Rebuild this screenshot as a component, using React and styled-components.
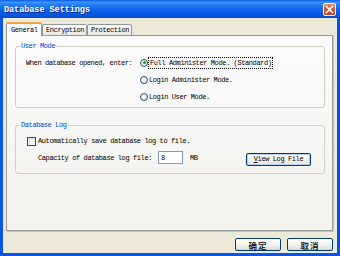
import React from 'react'
import styled, { createGlobalStyle } from 'styled-components'

const GlobalStyle = createGlobalStyle`
  html, body {
    margin: 0;
    padding: 0;
    background: #ece9d8;
  }
  * {
    box-sizing: border-box;
  }
`

const App = () => {
  return (
    <>
      <GlobalStyle />
      <Window>
        <TitleBar>
          <Title>Database Settings</Title>
          <CloseButton aria-label="Close">
            <svg width="9" height="9" viewBox="0 0 9 9">
              <path d="M1.5 1.5 L7.5 7.5 M7.5 1.5 L1.5 7.5" stroke="#fff" strokeWidth="1.6" strokeLinecap="square" />
            </svg>
          </CloseButton>
        </TitleBar>

        <Frame>
          <TabStrip>
            <Tab $active>General</Tab>
            <Tab>Encryption</Tab>
            <Tab>Protection</Tab>
          </TabStrip>

          <Panel>
            <Group>
              <Legend>User Mode</Legend>
              <ModeGrid>
                <PromptCell>When database opened, enter:</PromptCell>
                <Option>
                  <Radio $checked />
                  <Focused>Full Administer Mode. (Standard)</Focused>
                </Option>
                <Option>
                  <Radio />
                  <span>Login Administer Mode.</span>
                </Option>
                <Option>
                  <Radio />
                  <span>Login User Mode.</span>
                </Option>
              </ModeGrid>
            </Group>

            <Group $log>
              <Legend $log>Database Log</Legend>
              <CheckRow>
                <Checkbox />
                <span>Automatically save database log to file.</span>
              </CheckRow>
              <CapacityRow>
                <span>Capacity of database log file:</span>
                <SizeInput>8</SizeInput>
                <Unit>MB</Unit>
                <ViewButton><u>V</u>iew Log File</ViewButton>
              </CapacityRow>
            </Group>
          </Panel>

          <Footer>
            <DialogButton>确定</DialogButton>
            <DialogButton>取消</DialogButton>
          </Footer>
        </Frame>
      </Window>
    </>
  )
}

const Window = styled.div`
  width: 340px;
  height: 256px;
  display: flex;
  flex-direction: column;
  font-family: "Liberation Mono", "DejaVu Sans Mono", monospace;
  font-size: 7px;
  letter-spacing: -0.4px;
  color: #000;
  overflow: hidden;
`

const TitleBar = styled.div`
  height: 18px;
  flex: 0 0 18px;
  display: flex;
  align-items: center;
  justify-content: space-between;
  padding: 0 4px 0 4px;
  background: linear-gradient(180deg, #0a5de0 0%, #3c93fb 12%, #2a84f5 22%, #1670ef 40%, #0a60e8 65%, #0656e2 85%, #0049d0 100%);
`

const Title = styled.div`
  color: #fff;
  font-weight: bold;
  font-size: 8.6px;
  letter-spacing: -0.1px;
  text-shadow: 1px 1px 0 #0a1f8a;
  padding-top: 1px;
`

const CloseButton = styled.div`
  width: 13px;
  height: 13px;
  display: flex;
  align-items: center;
  justify-content: center;
  border: 1px solid #fff;
  border-radius: 2px;
  background: linear-gradient(180deg, #e88a68 0%, #d9582f 45%, #c8401b 100%);
`

const Frame = styled.div`
  flex: 1;
  display: flex;
  flex-direction: column;
  background: #ece9d8;
  border-style: solid;
  border-color: #0a55e6;
  border-width: 0 3px 3px 3px;
  padding: 4px 4px 0 3px;
`

const TabStrip = styled.div`
  height: 14px;
  display: flex;
  align-items: flex-end;
  margin-bottom: -1px;
  position: relative;
  z-index: 1;
`

const Tab = styled.div`
  height: ${p => (p.$active ? '14px' : '12px')};
  width: ${p => (p.$active ? '36px' : '45px')};
  display: flex;
  align-items: center;
  padding-left: ${p => (p.$active ? '4px' : '3px')};
  border: 1px solid #919b9c;
  border-bottom: ${p => (p.$active ? 'none' : '1px solid #919b9c')};
  border-top: ${p => (p.$active ? '2px solid #f0a53a' : '1px solid #919b9c')};
  border-radius: 2px 2px 0 0;
  background: ${p => (p.$active ? '#fcfcfe' : 'linear-gradient(180deg, #ffffff 0%, #f3f3ef 60%, #e9e8e1 100%)')};
  white-space: nowrap;
`

const Panel = styled.div`
  height: 196px;
  border: 1px solid #919b9c;
  box-shadow: 1px 1px 0 #c6c5b7;
  background: linear-gradient(180deg, #fcfcfe 0%, #f6f6f4 50%, #f4f3ee 100%);
  padding: 6px 7px 0 8px;
`

const Group = styled.fieldset`
  margin: ${p => (p.$log ? '13px 0 0 0' : '0')};
  border: 1px solid #d0d0bf;
  border-radius: 3px;
  padding: 4px 13px ${p => (p.$log ? '7px' : '2px')} ${p => (p.$log ? '11px' : '10px')};
  min-width: 0;
`

const Legend = styled.legend`
  color: #0046d5;
  line-height: 8px;
  padding: 0 1px;
  margin-left: ${p => (p.$log ? '-7px' : '-6px')};
`

const ModeGrid = styled.div`
  display: grid;
  grid-template-columns: 114px 1fr;
  grid-auto-rows: 17px;
  align-items: center;
`

const PromptCell = styled.div`
  grid-row: 1;
  grid-column: 1;
`

const Option = styled.div`
  grid-column: 2;
  display: flex;
  align-items: center;
  gap: 1px;
  white-space: nowrap;
`

const Radio = styled.span`
  width: 8px;
  height: 8px;
  border-radius: 50%;
  border: 1px solid #1c5180;
  background: radial-gradient(circle at 35% 35%, #ffffff 0%, #ecebe4 60%, #d6d2c2 100%);
  display: flex;
  align-items: center;
  justify-content: center;
  &::after {
    content: '';
    display: ${p => (p.$checked ? 'block' : 'none')};
    width: 3px;
    height: 3px;
    border-radius: 50%;
    background: #21a121;
  }
`

const Focused = styled.span`
  outline: 1px dotted #000;
  outline-offset: 0;
  padding: 1px 0 1px 1px;
`

const CheckRow = styled.div`
  height: 16px;
  display: flex;
  align-items: center;
  gap: 2px;
  white-space: nowrap;
`

const Checkbox = styled.span`
  width: 9px;
  height: 9px;
  border: 1px solid #1c5180;
  background: linear-gradient(135deg, #dcdbd3 0%, #f3f3ef 60%, #ffffff 100%);
`

const CapacityRow = styled.div`
  height: 17px;
  display: flex;
  align-items: center;
  padding-left: 11px;
  white-space: nowrap;
`

const SizeInput = styled.div`
  width: 25px;
  height: 13px;
  margin-left: 6px;
  border: 1px solid #7f9db9;
  background: #fff;
  padding-left: 2px;
  display: flex;
  align-items: center;
`

const Unit = styled.span`
  margin-left: 7px;
`

const ViewButton = styled.div`
  margin-left: auto;
  margin-top: 3px;
  width: 65px;
  height: 13px;
  display: flex;
  align-items: center;
  justify-content: center;
  border: 1px solid #003c74;
  border-radius: 2px;
  box-shadow: inset 0 0 0 1px #b8d0f4;
  background: linear-gradient(180deg, #ffffff 0%, #f4f4f0 50%, #e3e2da 100%);
  u {
    text-decoration: underline;
  }
`

const Footer = styled.div`
  display: flex;
  justify-content: flex-end;
  gap: 6px;
  padding-top: 7px;
`

const DialogButton = styled.div`
  width: 46px;
  height: 13px;
  display: flex;
  align-items: center;
  justify-content: center;
  border: 1px solid #003c74;
  border-radius: 2px;
  background: linear-gradient(180deg, #ffffff 0%, #f4f4f0 50%, #dcdad0 100%);
  font-family: "Noto Sans CJK SC", sans-serif;
  font-size: 8.5px;
  font-weight: 500;
  letter-spacing: 1px;
`

export default App
